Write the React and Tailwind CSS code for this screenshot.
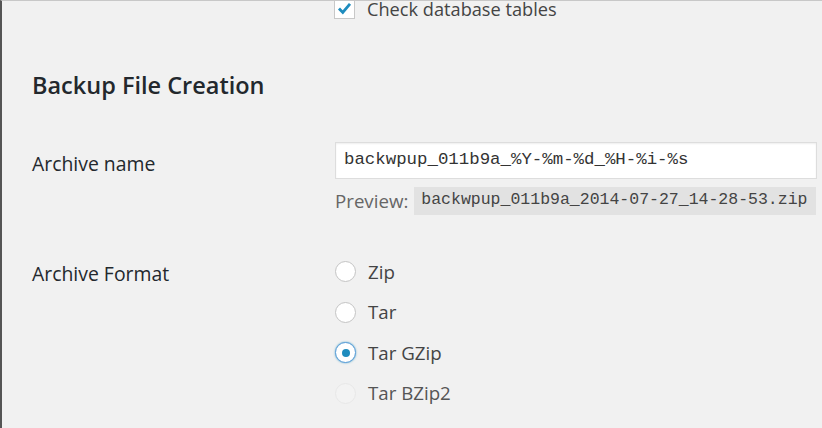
import React from "react";

const sans = { fontFamily: '"Open Sans", "Noto Sans", sans-serif' };

function Radio({ checked, disabled, label }) {
  return (
    <div className="flex items-center h-[40.5px]">
      <span
        className={
          "w-[21px] h-[21px] rounded-full flex items-center justify-center box-border " +
          (disabled
            ? "border border-[#e8e8e8] bg-[#f3f3f3]"
            : checked
            ? "border-[1.5px] border-[#5b9dd9] bg-white shadow-[0_0_2px_rgba(30,140,190,0.8)]"
            : "border-[1.5px] border-[#c4c4c4] bg-white")
        }
      >
        {checked && <span className="w-[8px] h-[8px] rounded-full bg-[#1e8cbe]" />}
      </span>
      <span className={"ml-[12px] text-[18.7px] " + (disabled ? "text-[#555]" : "text-[#444]")}>{label}</span>
    </div>
  );
}

export default function App() {
  return (
    <div className="w-[822px] h-[428px] overflow-hidden bg-[#f1f1f1] border-l-2 border-l-[#555] border-t border-t-[#c8c8c8] box-border" style={sans}>
      <div className="flex items-center ml-[332px] mt-[-3px] h-[21px]">
        <span className="w-[21px] h-[21px] border border-[#c8c8c8] bg-white flex items-center justify-center box-border shrink-0">
          <svg width="15" height="13" viewBox="0 0 15 13">
            <path d="M2 6.5 L5.8 10.5 L13 1.8" fill="none" stroke="#1e8cbe" strokeWidth="2.8" />
          </svg>
        </span>
        <span className="ml-[12px] text-[18.2px] text-[#444] leading-none pt-[1px]">Check database tables</span>
      </div>

      <h2 className="ml-[30px] mt-[55px] text-[23.5px] font-semibold text-[#23282d] leading-none">Backup File Creation</h2>

      <div className="flex mt-[44px]">
        <div className="w-[333px] shrink-0 pl-[30px] pt-[7px] text-[19.4px] text-[#23282d]">Archive name</div>
        <div className="flex flex-col">
          <div className="w-[482px] h-[37px] bg-white border border-[#ddd] shadow-[inset_0_1px_2px_rgba(0,0,0,0.07)] flex items-center pl-[8px] box-border">
            <span className="text-[17.4px] text-[#333]" style={{ fontFamily: '"Liberation Mono", monospace' }}>
              backwpup_011b9a_%Y-%m-%d_%H-%i-%s
            </span>
          </div>
          <div className="flex items-center mt-[8px]">
            <span className="text-[18.7px] text-[#666]">Preview:</span>
            <span className="ml-[6px] bg-[#e2e2e2] h-[28px] pl-[7px] pr-[9px] flex items-center text-[16.5px] text-[#444]" style={{ fontFamily: '"Liberation Mono", monospace' }}>
              backwpup_011b9a_2014-07-27_14-28-53.zip
            </span>
          </div>
        </div>
      </div>

      <div className="flex mt-[37px]">
        <div className="w-[333px] shrink-0 pl-[30px] pt-[7px] text-[19.4px] text-[#23282d]">Archive Format</div>
        <div className="flex flex-col">
          <Radio label="Zip" />
          <Radio label="Tar" />
          <Radio label="Tar GZip" checked />
          <Radio label="Tar BZip2" disabled />
        </div>
      </div>
    </div>
  );
}
